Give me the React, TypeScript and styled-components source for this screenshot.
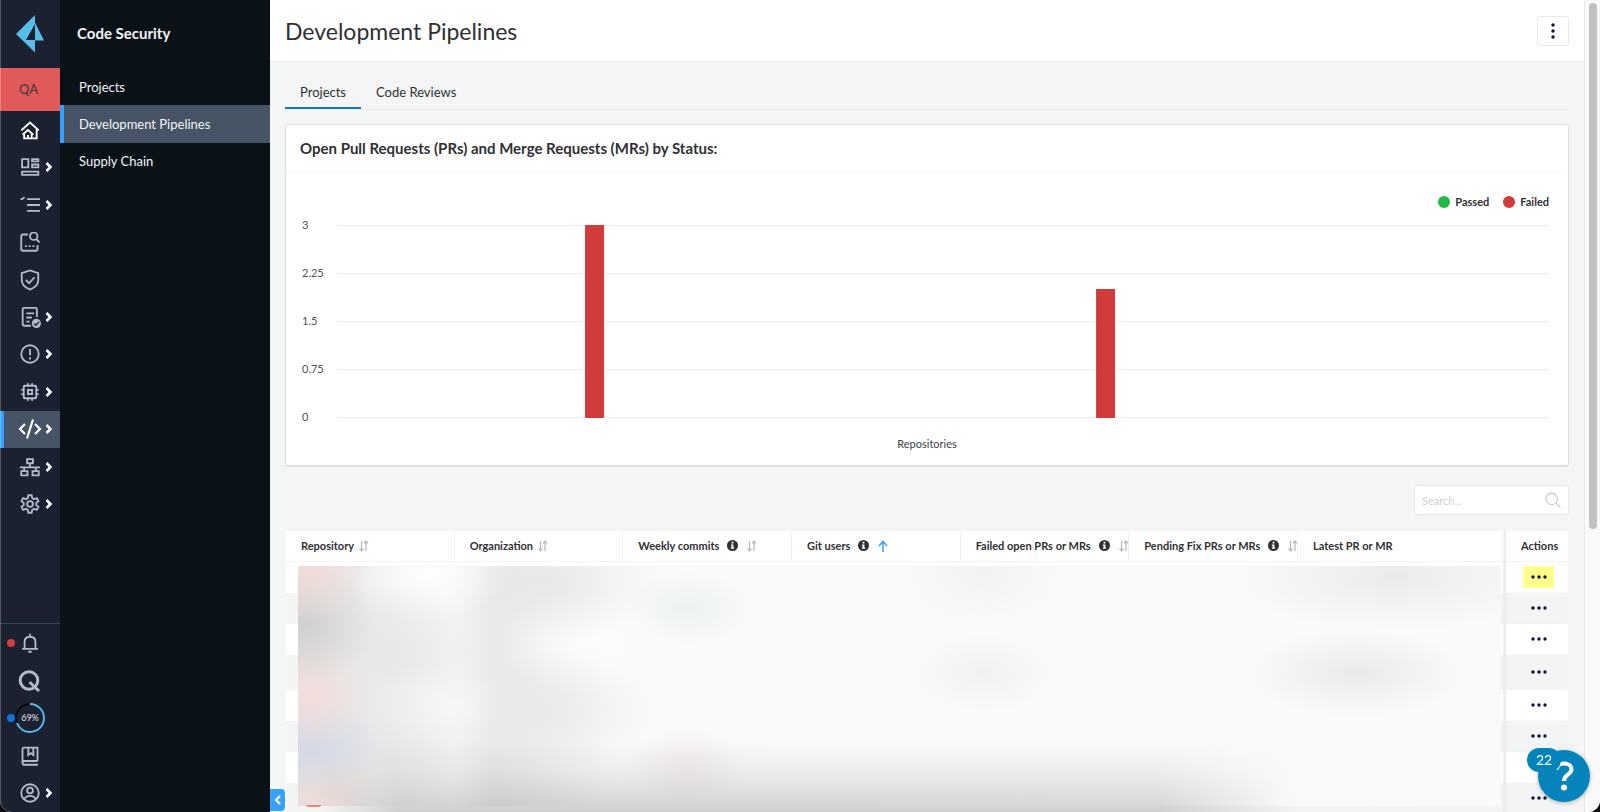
import React from "react";
import styled, { createGlobalStyle } from "styled-components";

const Global = createGlobalStyle`
  *, *::before, *::after { box-sizing: border-box; }
  body { margin: 0; background: #0a0a0c; color: #2f3033; font-family: Lato, "Liberation Sans", sans-serif; }
  button, input { font-family: inherit; color: inherit; }
  button { padding: 0; border: 0; background: none; cursor: pointer; }
  a { color: inherit; text-decoration: none; }
  ul { list-style: none; margin: 0; padding: 0; }
  h1, h2 { margin: 0; }
`;

const Shell = styled.div`
  position: relative;
  display: flex;
  height: 100vh;
  overflow: hidden;
  border-radius: 0 0 12px 12px;
  background: #f4f6f6;
  &::after {
    content: "";
    position: absolute;
    inset: 0;
    border-left: 1px solid rgba(255, 255, 255, 0.25);
    border-radius: inherit;
    pointer-events: none;
  }
`;

const Rail = styled.nav`
  flex: none;
  width: 60px;
  display: flex;
  flex-direction: column;
  justify-content: space-between;
  background: #1b2130;
`;

const LogoLink = styled.a`
  display: flex;
  justify-content: center;
  height: 68px;
  padding: 15px 1px 0 0;
`;

const Tenant = styled.div`
  height: 43px;
  padding-right: 3px;
  background: #e05a5a;
  color: #43363b;
  font-size: 13px;
  line-height: 42px;
  text-align: center;
`;

const RailList = styled.ul<{ $height: number; $divided?: boolean }>`
  display: grid;
  grid-auto-rows: 1fr;
  height: ${(p) => p.$height}px;
  border-top: ${(p) => (p.$divided ? "1px solid #34485a" : "0")};
`;

const RailItem = styled.li<{ $active?: boolean }>`
  display: grid;
  background: ${(p) => (p.$active ? "#475466" : "transparent")};
  box-shadow: ${(p) => (p.$active ? "inset 4px 0 #38a0ff" : "none")};
`;

const RailLink = styled.a<{ $bright?: boolean }>`
  position: relative;
  display: flex;
  align-items: center;
  justify-content: center;
  color: ${(p) => (p.$bright ? "#ffffff" : "#b3bbcb")};
`;

const Chevron = styled.svg`
  position: absolute;
  right: 7px;
  color: #ffffff;
`;

const StatusDot = styled.span<{ $color: string }>`
  position: absolute;
  left: 7px;
  width: 8px;
  height: 8px;
  border-radius: 50%;
  background: ${(p) => p.$color};
`;

const SubNav = styled.nav`
  flex: none;
  width: 210px;
  background: #0a1117;
  color: #f2f4f6;
`;

const SubTitle = styled.h2`
  height: 68px;
  padding-left: 17px;
  font-size: 15px;
  font-weight: 700;
  line-height: 66px;
`;

const SubList = styled.ul`
  display: grid;
  grid-auto-rows: 1fr;
  height: 112px;
`;

const SubLink = styled.a<{ $active?: boolean }>`
  display: flex;
  align-items: center;
  height: 100%;
  padding-left: 19px;
  font-size: 13px;
  background: ${(p) => (p.$active ? "#475466" : "transparent")};
  box-shadow: ${(p) => (p.$active ? "inset 4px 0 #38a0ff" : "none")};
`;

const Main = styled.main`
  position: relative;
  flex: 1;
  min-width: 0;
  overflow: hidden;
`;

const Header = styled.header`
  display: flex;
  align-items: center;
  justify-content: space-between;
  height: 62px;
  padding: 0 15px;
  border-bottom: 1px solid #eceeee;
  background: #ffffff;
`;

const Title = styled.h1`
  font-size: 23px;
  font-weight: 400;
  line-height: 30px;
`;

const MoreButton = styled.button`
  display: grid;
  place-items: center;
  width: 32px;
  height: 30px;
  border: 1px solid #e6e8ea;
  border-radius: 3px;
  color: #14123a;
`;

const Content = styled.div`
  padding: 14px 15px 0;
`;

const Tabs = styled.div`
  display: flex;
  height: 34px;
  border-bottom: 1px solid #e9ebeb;
`;

const Tab = styled.button<{ $active?: boolean }>`
  height: 33px;
  padding: 0 15px;
  font-size: 13px;
  border-bottom: 2px solid ${(p) => (p.$active ? "#0b75d8" : "transparent")};
`;

const Card = styled.section`
  height: 343px;
  margin-top: 14px;
  border: 1px solid #dde0e1;
  border-bottom-width: 2px;
  border-radius: 3px;
  background: #ffffff;
`;

const CardTitle = styled.h2`
  height: 48px;
  margin-right: 3px;
  padding-left: 14px;
  border-bottom: 1px solid #f4f5f5;
  font-size: 15px;
  font-weight: 700;
  line-height: 47px;
`;

const Legend = styled.ul`
  display: flex;
  justify-content: flex-end;
  align-items: flex-start;
  gap: 14px;
  height: 52px;
  padding: 21px 19px 0 0;
  font-size: 11px;
  font-weight: 700;
  line-height: 16px;
`;

const LegendItem = styled.li<{ $color: string }>`
  display: flex;
  align-items: center;
  gap: 5px;
  &::before {
    content: "";
    width: 12px;
    height: 12px;
    border-radius: 50%;
    background: ${(p) => p.$color};
  }
`;

const Plot = styled.div`
  display: flex;
  padding: 0 19px 0 16px;
`;

const Scale = styled.div`
  display: flex;
  flex-direction: column;
  justify-content: space-between;
  width: 36px;
  height: 206px;
  margin-top: -7px;
  color: #505357;
  font-size: 11px;
  line-height: 14px;
`;

const Bars = styled.svg`
  flex: 1;
  height: 194px;
`;

const AxisTitle = styled.div`
  padding-top: 12px;
  font-size: 11px;
  line-height: 16px;
  text-align: center;
  color: #404347;
`;

const SearchBox = styled.label`
  display: flex;
  align-items: center;
  width: 155px;
  height: 30px;
  margin: 18px 0 16px auto;
  padding: 0 7px;
  border: 1px solid #e3e6e7;
  border-radius: 3px;
  background: #ffffff;
  color: #cbcfd3;
`;

const SearchInput = styled.input`
  flex: 1;
  min-width: 0;
  padding: 0;
  border: 0;
  outline: 0;
  background: none;
  font-size: 11px;
  &::placeholder { color: #cdd0d4; }
`;

const TableWrap = styled.div`
  position: relative;
  margin: 0 1px;
`;

const Table = styled.table`
  width: 100%;
  table-layout: fixed;
  border-collapse: separate;
  border-spacing: 0;
  th, td { padding: 0; }
`;

const Head = styled.th`
  height: 31px;
  border-right: 1px solid #f1f2f2;
  border-bottom: 1px solid #f3f4f4;
  background: #ffffff;
  font-size: 11px;
  font-weight: 700;
  text-align: left;
  white-space: nowrap;
`;

const HeadInner = styled.span`
  display: flex;
  align-items: center;
  padding: 0 0 1px 15px;
  overflow: hidden;
`;

const InfoIcon = styled.svg`
  flex: none;
  margin: 0 0 1px 8px;
`;

const SortButton = styled.button<{ $active?: boolean; $wide?: boolean }>`
  flex: none;
  display: grid;
  width: 10px;
  margin-left: ${(p) => (p.$wide ? 9 : 5)}px;
  color: ${(p) => (p.$active ? "#38a0ff" : "#b4b7ba")};
`;

const ActionHead = styled(Head)`
  border-right: 0;
  border-left: 1px solid #e6e8e9;
  box-shadow: -2px 0 2px #f1f2f2;
`;

const Row = styled.tr<{ $tall?: boolean }>`
  height: ${(p) => (p.$tall ? 35 : 31)}px;
  background: #ffffff;
  &:nth-child(even) { background: #f3f5f5; }
`;

const ActionCell = styled.td`
  border-left: 1px solid #e6e8e9;
  box-shadow: -2px 0 2px #eceeee;
`;

const RowButton = styled.button<{ $highlight?: boolean }>`
  display: grid;
  place-items: center;
  width: 31px;
  height: 22px;
  margin: 0 auto 1px 17px;
  color: #14123a;
  background: ${(p) => (p.$highlight ? "#ffff8c" : "transparent")};
`;

const Redaction = styled.div`
  position: absolute;
  top: 35px;
  left: 12px;
  right: 67px;
  height: 240px;
  background:
    radial-gradient(55px 50px at 18px 5px, rgba(243, 216, 213, 0.8), transparent),
    radial-gradient(70px 60px at 8px 58px, rgba(200, 200, 200, 0.75), transparent),
    radial-gradient(60px 60px at 14px 128px, rgba(243, 220, 218, 0.95), transparent),
    radial-gradient(70px 50px at 12px 178px, rgba(208, 214, 230, 0.95), transparent),
    radial-gradient(55px 40px at 28px 226px, rgba(236, 214, 208, 0.8), transparent),
    radial-gradient(110px 70px at 90px 88px, rgba(228, 229, 229, 0.8), transparent),
    radial-gradient(110px 60px at 80px 180px, rgba(228, 229, 229, 0.8), transparent),
    radial-gradient(80px 50px at 130px 6px, rgba(255, 255, 255, 0.9), transparent),
    radial-gradient(70px 50px at 138px 138px, rgba(250, 250, 250, 0.8), transparent),
    radial-gradient(110px 60px at 250px 16px, rgba(230, 230, 230, 0.8), transparent),
    radial-gradient(110px 60px at 245px 145px, rgba(232, 232, 232, 0.8), transparent),
    radial-gradient(90px 55px at 290px 74px, rgba(252, 252, 252, 0.9), transparent),
    radial-gradient(60px 36px at 390px 42px, rgba(229, 240, 230, 0.7), transparent),
    radial-gradient(60px 40px at 388px 202px, rgba(243, 233, 231, 0.8), transparent),
    radial-gradient(80px 50px at 57% 8px, rgba(240, 240, 240, 0.8), transparent),
    radial-gradient(70px 40px at 57% 107px, rgba(239, 240, 240, 0.9), transparent),
    radial-gradient(160px 56px at 91% 10px, rgba(233, 234, 234, 0.95), transparent),
    radial-gradient(110px 44px at 88% 107px, rgba(232, 233, 233, 0.95), transparent),
    linear-gradient(90deg, #e4e5e5 0, #ecedee 80px, #f5f6f6 155px, #e8e9e9 195px, #ebecec 225px, #f8f9f9 310px, #f9fafa 100%);
`;

const LowerShade = styled.div`
  position: absolute;
  top: 211px;
  left: 12px;
  right: 270px;
  height: 72px;
  background: linear-gradient(transparent, rgba(150, 155, 153, 0.12) 40%, rgba(150, 155, 153, 0.42));
  mask-image: linear-gradient(90deg, transparent 20px, #000 100px, #000 86%, transparent);
`;

const RedSliver = styled.span`
  position: absolute;
  top: 274px;
  left: 20px;
  width: 15px;
  height: 2px;
  border-radius: 0 0 2px 2px;
  background: #ef8572;
`;

const Collapse = styled.button`
  position: absolute;
  left: 0;
  bottom: 1px;
  display: grid;
  place-items: center;
  width: 15px;
  height: 22px;
  border-radius: 0 4px 4px 0;
  background: #38a0ff;
  color: #ffffff;
`;

const ScrollTrack = styled.div`
  flex: none;
  width: 16px;
  padding: 3px 3px 0 4px;
  border-left: 1px solid #e6e7e7;
  background: #fafafa;
`;

const ScrollThumb = styled.div`
  width: 8px;
  height: 65%;
  border-radius: 4px;
  background: #c1c1c1;
`;

const Help = styled.button`
  position: fixed;
  right: 10px;
  bottom: 10px;
  display: grid;
  place-items: center;
  width: 52px;
  height: 52px;
  border-radius: 50%;
  background: #0584bb;
  color: #ffffff;
  box-shadow: 0 1px 4px rgba(0, 0, 0, 0.3);
`;

const HelpCount = styled.span`
  position: absolute;
  top: -2px;
  left: -11px;
  width: 34px;
  height: 24px;
  border-radius: 12px;
  background: #0584bb;
  font-size: 14px;
  line-height: 24px;
  text-align: center;
`;

const Icon = ({ children, size = 20, width = 2.2 }: { children: React.ReactNode; size?: number; width?: number }) => (
  <svg width={size} height={size} viewBox="0 0 24 24" fill="none" stroke="currentColor" strokeWidth={width} aria-hidden="true">
    {children}
  </svg>
);

const icons: Record<string, React.ReactNode> = {
  home: (
    <Icon>
      <path d="M1.500 12.500 12 3l10.500 9.500M20 11v11h-5M4.500 9.500V11" />
      <path d="M3 17.500 9.500 12l6.500 5.500M5 16v6h9v-6" />
      <path d="M9.500 22v-4" />
    </Icon>
  ),
  dashboard: (
    <Icon>
      <path d="M2.500 2.500H10v10H2.500zM14.500 2.500H22v2.800h-7.500zM14.500 9H22v3.500h-7.500zM2.500 17.500H22v4H2.500z" />
    </Icon>
  ),
  list: (
    <Icon>
      <path d="M8.500 5H24M8.500 12H24M8.500 19H24M.5 5l2 0 3-2.500" />
    </Icon>
  ),
  investigate: (
    <Icon>
      <path d="M9.500 3H3.500Q1.500 3 1.500 5v15.500q0 2 2 2h15.500q2 0 2-2v-5" />
      <circle cx="16.500" cy="5" r="4.500" />
      <path d="m19.500 8.500 4 4M6 17h2.200M10.500 17h2.200M15 17h2.200" />
    </Icon>
  ),
  shield: (
    <Icon size={22} width={2}>
      <path d="M12 1.500 3 4.500v7.500c0 5 4 8.500 9 10.500 5-2 9-5.500 9-10.500V4.500z" />
      <path d="m7.500 12 3.500 3.500 6-6.500" />
    </Icon>
  ),
  report: (
    <Icon size={22} width={2}>
      <path d="M13 21.500H5.500Q4 21.500 4 20V3.500Q4 2 5.500 2H18q1.500 0 1.500 1.500V12M8 8h8.500M8 12.500h6M8 17h3.500" />
      <circle cx="19" cy="19" r="5" fill="currentColor" stroke="none" />
      <path d="m16.500 19 2 2 3.500-4" stroke="#1b2130" strokeWidth="1.500" />
    </Icon>
  ),
  alert: (
    <Icon>
      <circle cx="12" cy="12" r="10.500" />
      <path d="M12 6v7.500M12 16v2.500" />
    </Icon>
  ),
  chip: (
    <Icon>
      <rect x="4.500" y="4.500" width="15" height="15" rx="1" />
      <rect x="9.500" y="9.500" width="5" height="5" />
      <path d="M9.500 1.500v3M14.500 1.500v3M9.500 19.500v3M14.500 19.500v3M1.500 9.500h3M1.500 14.500h3M19.500 9.500h3M19.500 14.500h3" />
    </Icon>
  ),
  code: (
    <Icon size={24} width={2.2}>
      <path d="M7 7 2 12l5 5M17 7l5 5-5 5M15 2.500 9 21.500" />
    </Icon>
  ),
  network: (
    <Icon>
      <path d="M8.500 2.500h7v5h-7zM1.500 17H9v5H1.500zM15 17h7.500v5H15zM12 7.500v5M0 12.500h24M5 12.500V17M19 12.500V17" />
    </Icon>
  ),
  gear: (
    <Icon>
      <circle cx="12" cy="12" r="3.500" />
      <path d="M10 1.500h4l.7 3.400 2.200 1.300 3.300-1.200 2 3.500-2.700 2.300v2.400l2.700 2.300-2 3.500-3.300-1.200-2.200 1.300-.7 3.400h-4l-.7-3.400-2.200-1.300L3.800 19l-2-3.500 2.700-2.300v-2.400L1.800 8.500l2-3.500 3.300 1.200 2.200-1.300z" />
    </Icon>
  ),
  bell: (
    <Icon>
      <path d="M2.500 19h19M5.500 19v-8c0-4 2.500-6.500 6.500-6.500s6.500 2.500 6.500 6.500v8M12 1v3.500M10 22.500h4" />
    </Icon>
  ),
  q: (
    <Icon size={24} width={3}>
      <circle cx="11" cy="12.500" r="8.800" />
      <path d="m11.500 14 9.500 9" />
    </Icon>
  ),
  book: (
    <Icon>
      <path d="M21 18V2H5Q3 2 3 4v16q0 2.500 2 2.500h16.500M3 20q0-2 2-2h16M10 3v8l3-2.500 3 2.500V3" />
    </Icon>
  ),
  user: (
    <Icon>
      <circle cx="12" cy="12" r="10.500" />
      <circle cx="12" cy="9" r="3.500" />
      <path d="M5 19.500c1.500-3 4-4 7-4s5.500 1 7 4" />
    </Icon>
  ),
  progress: (
    <svg width="30" height="30" viewBox="0 0 30 30" fill="none" strokeWidth="2" aria-hidden="true">
      <circle cx="15" cy="15" r="14" stroke="#05080d" />
      <circle cx="15" cy="15" r="14" stroke="#55bde6" pathLength="100" strokeDasharray="69 31" transform="rotate(-90 15 15)" />
      <text x="15" y="18" textAnchor="middle" fontSize="9" fill="#e5e8ee">69%</text>
    </svg>
  ),
};

const Arrow = () => (
  <Chevron width="8" height="10" viewBox="0 0 8 10" fill="none" stroke="currentColor" strokeWidth="2.500" aria-hidden="true">
    <path d="m1.500 1 4 4-4 4" />
  </Chevron>
);

const railTop = [
  { id: "home", label: "Home", bright: true },
  { id: "dashboard", label: "Dashboard", more: true },
  { id: "list", label: "Inventory", more: true },
  { id: "investigate", label: "Investigate" },
  { id: "shield", label: "Policies" },
  { id: "report", label: "Compliance", more: true },
  { id: "alert", label: "Alerts", more: true },
  { id: "chip", label: "Compute", more: true },
  { id: "code", label: "Code Security", more: true, active: true, bright: true },
  { id: "network", label: "Network", more: true },
  { id: "gear", label: "Settings", more: true },
];

const railBottom = [
  { id: "bell", label: "Notifications", dot: "#d63d3d" },
  { id: "q", label: "Quick search" },
  { id: "progress", label: "Setup progress", dot: "#0b75d8" },
  { id: "book", label: "Documentation" },
  { id: "user", label: "Profile", more: true },
];

type RailEntry = { id: string; label: string; more?: boolean; active?: boolean; bright?: boolean; dot?: string };

const RailEntries = ({ entries }: { entries: RailEntry[] }) => (
  <>
    {entries.map((e) => (
      <RailItem key={e.id} $active={e.active}>
        <RailLink href="#" aria-label={e.label} $bright={e.bright}>
          {e.dot && <StatusDot $color={e.dot} />}
          {icons[e.id]}
          {e.more && <Arrow />}
        </RailLink>
      </RailItem>
    ))}
  </>
);

const columns = [
  { name: "Repository", sort: "both" },
  { name: "Organization", sort: "both" },
  { name: "Weekly commits", sort: "both", info: true },
  { name: "Git users", sort: "up", info: true },
  { name: "Failed open PRs or MRs", sort: "both", info: true },
  { name: "Pending Fix PRs or MRs", sort: "both", info: true },
  { name: "Latest PR or MR" },
];

const ticks = ["3", "2.25", "1.5", "0.75", "0"];
const bars = [
  { x: "20.4%", value: 3 },
  { x: "62.6%", value: 2 },
];
const rows = Array.from({ length: 9 }, (_, i) => ({ id: i, tall: i === 3 }));

const Dots = ({ vertical }: { vertical?: boolean }) => (
  <svg width="16" height="16" viewBox="0 0 16 16" fill="currentColor" aria-hidden="true">
    {[2, 8, 14].map((p) => (
      <circle key={p} cx={vertical ? 8 : p} cy={vertical ? p : 8} r="1.700" />
    ))}
  </svg>
);

export default function App() {
  return (
    <>
      <Global />
      <Shell>
        <Rail aria-label="Main">
          <div>
            <LogoLink href="#" aria-label="Prisma Cloud">
              <svg width="28" height="38" viewBox="0 0 28 38" aria-hidden="true">
                <path fill="#55bde6" fillRule="evenodd" d="M19 0v37.500L0 19zM19 9 10 25h9z" />
                <path fill="#55bde6" d="M19 7.500 28 25.500h-9z" />
              </svg>
            </LogoLink>
            <Tenant>QA</Tenant>
            <RailList $height={412}>
              <RailEntries entries={railTop} />
            </RailList>
          </div>
          <RailList $height={189} $divided>
            <RailEntries entries={railBottom} />
          </RailList>
        </Rail>

        <SubNav aria-label="Code Security">
          <SubTitle>Code Security</SubTitle>
          <SubList>
            <li><SubLink href="#">Projects</SubLink></li>
            <li><SubLink href="#" $active>Development Pipelines</SubLink></li>
            <li><SubLink href="#">Supply Chain</SubLink></li>
          </SubList>
        </SubNav>

        <Main>
          <Header>
            <Title>Development Pipelines</Title>
            <MoreButton aria-label="More options"><Dots vertical /></MoreButton>
          </Header>
          <Content>
            <Tabs role="tablist">
              <Tab role="tab" aria-selected="true" $active>Projects</Tab>
              <Tab role="tab" aria-selected="false">Code Reviews</Tab>
            </Tabs>

            <Card>
              <CardTitle>Open Pull Requests (PRs) and Merge Requests (MRs) by Status:</CardTitle>
              <Legend>
                <LegendItem $color="#21ba45">Passed</LegendItem>
                <LegendItem $color="#d13b3b">Failed</LegendItem>
              </Legend>
              <Plot>
                <Scale>{ticks.map((t) => <span key={t}>{t}</span>)}</Scale>
                <Bars role="img" aria-label="Failed requests by repository">
                  {ticks.map((t, i) => (
                    <line key={t} x1="0" x2="100%" y1={i * 48 + 0.5} y2={i * 48 + 0.5} stroke="#eceeee" />
                  ))}
                  {bars.map((b) => (
                    <rect key={b.x} x={b.x} y={192 - b.value * 64} width="19" height={b.value * 64 + 1} fill="#d13b3b" />
                  ))}
                </Bars>
              </Plot>
              <AxisTitle>Repositories</AxisTitle>
            </Card>

            <SearchBox>
              <SearchInput type="search" placeholder="Search..." aria-label="Search" />
              <svg width="16" height="16" viewBox="0 0 16 16" fill="none" stroke="currentColor" strokeWidth="1.300" aria-hidden="true">
                <circle cx="6.800" cy="6.800" r="5.800" />
                <path d="m11 11 4.500 4.500" />
              </svg>
            </SearchBox>

            <TableWrap>
              <Table>
                <colgroup>
                  {columns.map((c, i) => <col key={c.name} width={i === 6 ? 207 : undefined} />)}
                  <col width="63" />
                </colgroup>
                <thead>
                  <tr>
                    {columns.map((c) => (
                      <Head key={c.name} scope="col">
                        <HeadInner>
                          {c.name}
                          {c.info && (
                            <InfoIcon width="11" height="11" viewBox="0 0 12 12" aria-hidden="true">
                              <circle cx="6" cy="6" r="6" fill="#2f3033" />
                              <path d="M5 2h2v1.800H5zM4.200 5H7v3.300h.8v1.200H4.200V8.300H5V6.200h-.8z" fill="#fff" />
                            </InfoIcon>
                          )}
                          {c.sort && (
                            <SortButton aria-label={`Sort by ${c.name}`} $active={c.sort === "up"} $wide={c.info}>
                              {c.sort === "up" ? (
                                <svg width="10" height="12" viewBox="0 0 10 12" fill="none" stroke="currentColor" strokeWidth="1.500">
                                  <path d="M5 12V2M1 6l4-4.500L9 6" />
                                </svg>
                              ) : (
                                <svg width="10" height="12" viewBox="0 0 10 12" fill="none" stroke="currentColor" strokeWidth="1.200">
                                  <path d="M2.500 1v10M.5 8.500l2 2.500 2-2.500M7 11V1M5 3.500 7 1l2 2.500" />
                                </svg>
                              )}
                            </SortButton>
                          )}
                        </HeadInner>
                      </Head>
                    ))}
                    <ActionHead scope="col"><HeadInner>Actions</HeadInner></ActionHead>
                  </tr>
                </thead>
                <tbody>
                  {rows.map((r) => (
                    <Row key={r.id} $tall={r.tall}>
                      {columns.map((c) => <td key={c.name} />)}
                      <ActionCell>
                        <RowButton aria-label="Row actions" $highlight={r.id === 0}><Dots /></RowButton>
                      </ActionCell>
                    </Row>
                  ))}
                </tbody>
              </Table>
              <Redaction />
              <LowerShade />
              <RedSliver />
            </TableWrap>
          </Content>
          <Collapse aria-label="Collapse menu">
            <svg width="7" height="10" viewBox="0 0 7 10" fill="none" stroke="currentColor" strokeWidth="2" aria-hidden="true">
              <path d="M6 1 2 5l4 4" />
            </svg>
          </Collapse>
        </Main>
        <ScrollTrack><ScrollThumb /></ScrollTrack>
      </Shell>
      <Help aria-label="Help, 22 new items">
        <HelpCount>22</HelpCount>
        <svg width="20" height="30" viewBox="0 0 20 30" fill="none" stroke="currentColor" strokeWidth="4" aria-hidden="true">
          <path d="M2.500 8.500C3 4.500 6 2.500 10 2.500c4.500 0 7.500 2.300 7.500 6 0 5-7.500 4.500-7.500 11.500" />
          <circle cx="10" cy="26.500" r="3" fill="currentColor" stroke="none" />
        </svg>
      </Help>
    </>
  );
}
